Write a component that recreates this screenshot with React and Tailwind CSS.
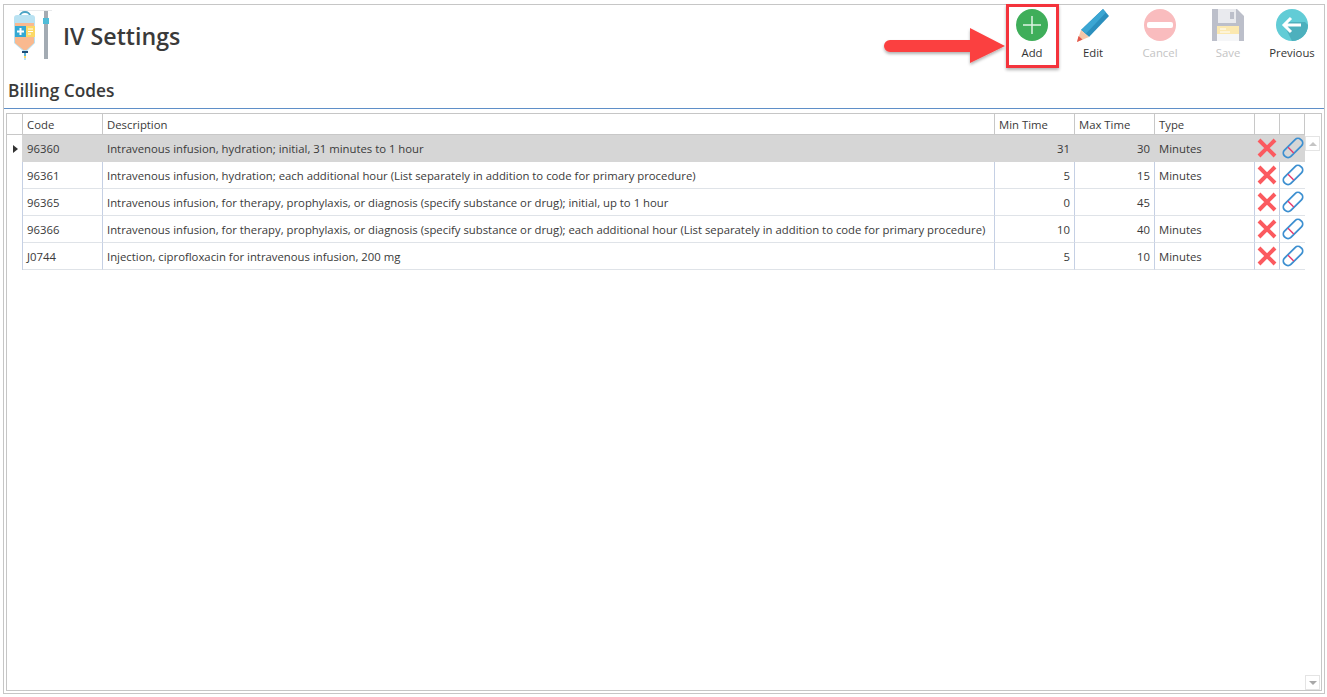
const FONT = "font-['Open_Sans',sans-serif]";

const ROWS = [
  { code: "96360", desc: "Intravenous infusion, hydration; initial, 31 minutes to 1 hour", min: 31, max: 30, type: "Minutes" },
  { code: "96361", desc: "Intravenous infusion, hydration; each additional hour (List separately in addition to code for primary procedure)", min: 5, max: 15, type: "Minutes" },
  { code: "96365", desc: "Intravenous infusion, for therapy, prophylaxis, or diagnosis (specify substance or drug); initial, up to 1 hour", min: 0, max: 45, type: "" },
  { code: "96366", desc: "Intravenous infusion, for therapy, prophylaxis, or diagnosis (specify substance or drug); each additional hour (List separately in addition to code for primary procedure)", min: 10, max: 40, type: "Minutes" },
  { code: "J0744", desc: "Injection, ciprofloxacin for intravenous infusion, 200 mg", min: 5, max: 10, type: "Minutes" },
];

const COLS = "grid-cols-[16px_80px_892px_80px_80px_100px_25px_25px]";

// ── Icons ─────────────────────────────────────────────────────────────────
const IvBagIcon = () => (
  <svg width="44" height="50" viewBox="0 0 44 50">
    <rect x="9" y="0" width="33" height="1" fill="#e8eaec" />
    <rect x="34" y="1" width="4" height="48" fill="#a3abb3" />
    <rect x="33" y="8" width="6" height="6" fill="#4fbcd8" />
    <path d="M10 6a5 4 0 0 1 10 0" fill="none" stroke="#4aa3c4" strokeWidth="2" />
    <path d="M4 8a3 3 0 0 1 3-3h15a3 3 0 0 1 3 3v25l-8 8h-4l-9-8z" fill="#b9e2f2" />
    <path d="M5 13h19v20l-7.500 7h-3L5 33z" fill="#f9b98f" />
    <rect x="5" y="16" width="11" height="11" fill="#35a9d3" />
    <rect x="16" y="16" width="9" height="11" fill="#fbd968" />
    <path d="M10.500 18v7M7 21.500h7" stroke="#fff" strokeWidth="2" />
    <path d="M18 19h5M18 21.500h5M18 24h3" stroke="#fff" strokeWidth="1" />
    <rect x="12" y="41" width="6" height="2" fill="#1f4e79" />
    <rect x="14" y="43" width="2" height="3" fill="#5fb8d8" />
    <rect x="14" y="46" width="2" height="2" fill="#fbd968" />
    <rect x="14" y="48" width="2" height="2" fill="#b9e2f2" />
  </svg>
);

const RoundIcon = ({ fill, children }) => (
  <svg width="32" height="32" viewBox="0 0 32 32">
    <circle cx="16" cy="16" r="16" fill={fill} />
    {children}
  </svg>
);

const PencilIcon = () => (
  <svg width="32" height="33" viewBox="0 0 32 33">
    <path d="M26 0l6 7-20 21-8-7z" fill="#2b8fbd" />
    <path d="M26 0l3 3.500-20 21-5-3.500z" fill="#3ba6d3" />
    <path d="M4 21l8 7-12 5z" fill="#f6c6a8" />
    <path d="M0 33l1.500-6 4 3.500z" fill="#e2574c" />
  </svg>
);

const SaveIcon = () => (
  <svg width="32" height="32" viewBox="0 0 32 32">
    <path d="M0 0h25l7 7v25H0z" fill="#bcbfca" />
    <path d="M6 0h18v14H6z" fill="#e9eaee" />
    <rect x="18" y="3" width="4" height="7" fill="#bcbfca" />
    <rect x="5" y="17" width="22" height="15" fill="#f5f6f8" />
    <rect x="5" y="17" width="22" height="8" fill="#fbe8b0" />
    <path d="M8 20h6M8 23h10" stroke="#fff" strokeWidth="1" />
  </svg>
);

const DeleteIcon = () => (
  <svg width="20" height="20" viewBox="0 0 20 20">
    <path d="M2 2l16 16M18 2L2 18" stroke="#fb5a5f" strokeWidth="4" />
  </svg>
);

const PillIcon = () => (
  <svg width="22" height="22" viewBox="0 0 22 22" className="overflow-visible">
    <g transform="rotate(-45 11 11)">
      <rect x="-0.500" y="6.500" width="23" height="9" rx="4" fill="none" stroke="#3c8fd0" strokeWidth="1.800" />
      <path d="M8 7v8" stroke="#e8386a" strokeWidth="1.400" />
    </g>
  </svg>
);

// ── Toolbar ───────────────────────────────────────────────────────────────
const ToolButton = ({ icon, label, disabled, className = "" }) => (
  <div className={`flex flex-col items-center pt-[4px] ${className}`}>
    <div className="h-[33px] flex items-start justify-center">{icon}</div>
    <span className={`mt-[3px] text-[11.330px] leading-[16px] ${disabled ? "text-[#c4c4c4]" : "text-[#333]"}`}>{label}</span>
  </div>
);

const AddArrow = () => (
  <svg className="absolute left-[880px] top-[24px]" width="130" height="46" viewBox="0 0 130 46">
    <defs>
      <filter id="arrowShadow" x="-10%" y="-20%" width="120%" height="150%">
        <feDropShadow dx="0" dy="2" stdDeviation="1.500" floodColor="#000" floodOpacity="0.3" />
      </filter>
    </defs>
    <path d="M10 16h80V4l35 18-35 17V28H10a6 6 0 0 1 0-12z" fill="#fb4141" filter="url(#arrowShadow)" />
  </svg>
);

export default function App() {
  return (
    <div className={`${FONT} relative h-[697px] w-[1327px] bg-white pl-[3px] pt-[4px] pr-[2px] pb-[3px] overflow-hidden`}>
      <div className="h-full flex flex-col border border-[#c6c6c6] pl-[2px] pr-[2px] pb-[2px]">
        <header className="h-[69px] shrink-0 flex">
          <div className="pl-[4px] pt-[5px] w-[57px]">
            <IvBagIcon />
          </div>
          <h1 className="mt-[15px] text-[23.200px] leading-[32px] font-semibold text-[#3a3a3a]">IV Settings</h1>
          <div className="flex-1" />
          <ToolButton className="w-[60px] mr-[11px]" label="Add"
            icon={<RoundIcon fill="#3fae5a"><path d="M16 7v18M7 16h18" stroke="#dff3e4" strokeWidth="1.500" /></RoundIcon>} />
          <ToolButton className="w-[40px] mr-[27px]" label="Edit" icon={<PencilIcon />} />
          <ToolButton className="w-[40px] mr-[28px]" label="Cancel" disabled
            icon={<RoundIcon fill="#f9bcbe"><rect x="3" y="13" width="26" height="6" rx="2" fill="#fff" /></RoundIcon>} />
          <ToolButton className="w-[40px] mr-[20px]" label="Save" disabled icon={<SaveIcon />} />
          <ToolButton className="w-[48px] mr-[6px]" label="Previous"
            icon={<RoundIcon fill="#62ccd6"><path d="M16 32a16 16 0 0 0 16-16l-3-3H12l-3 5z" fill="#4db0bd" /><path d="M8 16h17M15 9l-7 7 7 7" fill="none" stroke="#fff" strokeWidth="3" /></RoundIcon>} />
        </header>

        <h2 className="shrink-0 h-[35px] -mx-[2px] pl-[4px] pt-[4px] text-[17.300px] leading-[26px] font-semibold text-[#3a3a3a] border-b border-[#5f8fc8]">
          Billing Codes
        </h2>

        <div className="mt-[4px] flex-1 min-h-0 flex flex-col border border-[#c6c6c6] text-[11.330px] text-[#3a3a3a]">
          <div className={`grid ${COLS} h-[21px] shrink-0 pr-[18px]`}>
            <div className="border-r border-b border-[#c8c8c8]" />
            {["Code", "Description", "Min Time", "Max Time", "Type", "", ""].map((h, i) => (
              <div key={i} className="border-r border-b border-[#c8c8c8] pl-[4px] pt-[2px] leading-[18px]">{h}</div>
            ))}
          </div>
          <div className="flex-1 min-h-0 flex">
            <div className="flex-1">
              {ROWS.map((r, i) => {
                const selected = i === 0;
                const line = selected ? "border-[#d6d6d6]" : "border-[#c5d0e4]";
                const cell = `border-b ${line} ${selected ? "bg-[#d6d6d6]" : "border-b-[#dfe3e8]"}`;
                return (
                  <div key={r.code} className={`grid ${COLS} h-[27px]`}>
                    <div className={`border-r ${line} flex items-center justify-center pl-[1px]`}>
                      {selected && <span className="border-l-[5px] border-l-[#333] border-y-[4.500px] border-y-transparent" />}
                    </div>
                    <div className={`border-r ${cell} pl-[4px] pt-[2px] leading-[24px]`}>{r.code}</div>
                    <div className={`border-r ${cell} pl-[4px] pt-[2px] leading-[24px] whitespace-nowrap`}>{r.desc}</div>
                    <div className={`border-r ${cell} pr-[4px] pt-[2px] text-right leading-[24px]`}>{r.min}</div>
                    <div className={`border-r ${cell} pr-[4px] pt-[2px] text-right leading-[24px]`}>{r.max}</div>
                    <div className={`border-r ${cell} pl-[4px] pt-[2px] leading-[24px]`}>{r.type}</div>
                    <div className={`border-r ${cell} flex items-center justify-center pr-[1px]`}><DeleteIcon /></div>
                    <div className={`${cell} flex items-center justify-center`}><PillIcon /></div>
                  </div>
                );
              })}
            </div>
            <div className="w-[18px] shrink-0 flex flex-col justify-between pt-[1px]">
              <div className="h-[15px] w-[15px] border border-[#e4e4e4] flex items-center justify-center">
                <span className="border-b-[4px] border-b-[#c4c4c4] border-x-[4px] border-x-transparent" />
              </div>
              <div className="h-[15px] w-[15px] border border-[#e4e4e4] flex items-center justify-center">
                <span className="border-t-[4px] border-t-[#a8a8a8] border-x-[4px] border-x-transparent" />
              </div>
            </div>
          </div>
        </div>
      </div>

      {/* annotation over the toolbar */}
      <AddArrow />
      <div className="absolute left-[1006px] top-[4px] w-[53px] h-[64px] border-[3px] border-[#f4333c] shadow-[0_2px_3px_rgba(0,0,0,0.3)]" />
    </div>
  );
}
